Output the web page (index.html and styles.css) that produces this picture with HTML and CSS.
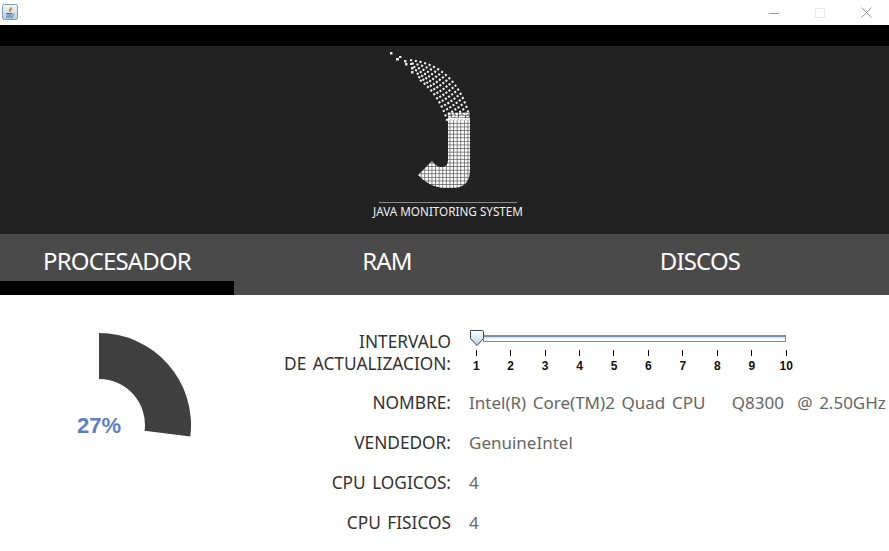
FILE: index.html
```html
<!DOCTYPE html>
<html lang="es">
<head>
<meta charset="utf-8">
<title>Java Monitoring System</title>
<link rel="stylesheet" href="styles.css">
</head>
<body>
<div class="window">
  <div class="titlebar">
    <svg class="app-icon" width="16" height="16" viewBox="0 0 16 16">
      <defs><linearGradient id="ig" x1="0" y1="0" x2="0" y2="1"><stop offset="0" stop-color="#f4f8fc"/><stop offset="1" stop-color="#b5cbe0"/></linearGradient></defs>
      <rect x=".5" y=".5" width="15" height="15" rx="2" fill="url(#ig)" stroke="#7f9ab5"/>
      <path d="M8.500 2C9.500 4 6.500 5 7 7c.2.7.8 1.200 1.200 1.500C7.800 7 10.500 6 10 3.800 9.700 4.500 9.400 3 8.500 2z" fill="#e8761e"/>
      <path d="M4 9.500h6M4.500 11h5M4 13h7" stroke="#3d6ea5" stroke-width="1" fill="none"/>
      <path d="M10.500 9.500c2 0 2 2-.5 2.200" stroke="#3d6ea5" stroke-width=".8" fill="none"/>
    </svg>
    <div class="controls">
      <div class="ctl"><svg width="10" height="10" viewBox="0 0 10 10"><path d="M0 5.500h10" stroke="#999" stroke-width="1"/></svg></div>
      <div class="ctl"><svg width="10" height="10" viewBox="0 0 10 10"><rect x=".5" y=".5" width="9" height="9" fill="none" stroke="#e6e6e6"/></svg></div>
      <div class="ctl"><svg width="11" height="11" viewBox="0 0 11 11"><path d="M.5.5l10 10M10.500.5l-10 10" stroke="#999" stroke-width="1"/></svg></div>
    </div>
  </div>
  <div class="blackbar"></div>
  <header class="banner">
    <svg class="logo" width="90" height="142" viewBox="385 48 90 142">
      <defs>
        <pattern id="grid" x="418" y="113" width="3.6" height="3.6" patternUnits="userSpaceOnUse">
          <rect width="3.6" height="3.6" fill="#666"/>
          <rect width="2.8" height="2.8" fill="#fff"/>
        </pattern>
        <pattern id="grid2" x="448" y="110" width="3.6" height="2.8" patternUnits="userSpaceOnUse">
          <rect width="2.8" height="2" fill="#fff"/>
        </pattern>
      </defs>
      <g fill="none" stroke="#f2f2f2" stroke-width="2.1" stroke-dasharray="2.1 2.700">
        <path d="M410 60Q455 65 469 115"/>
        <path d="M411.700 63.300Q452.500 70 465.500 116.300"/>
        <path d="M413.300 66.700Q450 75 462 117.700"/>
        <path d="M415 70Q447.500 80 458.500 119"/>
        <path d="M416.700 73.300Q445 85 455 120.300"/>
        <path d="M418.300 76.700Q442.500 90 451.500 121.700"/>
        <path d="M420 80Q440 95 448 123"/>
      </g>
      <g fill="#e6e6e6">
        <rect x="390" y="52" width="2.500" height="2.500"/>
        <rect x="396" y="58" width="3" height="2.500"/>
        <rect x="399" y="56" width="2.500" height="2"/>
        <rect x="404" y="60" width="2.500" height="2.500"/>
        <rect x="405" y="63" width="2.500" height="2.500"/>
        <rect x="410" y="63" width="2.500" height="2"/>
        <rect x="411" y="67" width="2.500" height="2.500"/>
        <rect x="411" y="71" width="2.500" height="2.500"/>
      </g>
      <path d="M448 118H470V170Q470 188 452 188H442Q428 186 418 175L432 161Q436 167 442 167Q448 167 448 160Z" fill="url(#grid)"/>
      <rect x="448" y="112" width="22" height="9" fill="url(#grid2)"/>
    </svg>
    <div class="brand">JAVA MONITORING SYSTEM</div>
  </header>
  <nav class="tabs">
    <div class="tab tab-active">PROCESADOR</div>
    <div class="tab">RAM</div>
    <div class="tab">DISCOS</div>
  </nav>
  <main class="content">
    <div class="gauge">
      <svg width="92" height="104" viewBox="99 333 92 104">
        <path d="M99 333A92 92 0 0 1 190.300 436.500L144.600 430.800A46 46 0 0 0 99 379Z" fill="#404040"/>
      </svg>
      <div class="gauge-value">27%</div>
    </div>
    <div class="form">
      <div class="label label-first">INTERVALO<br>DE ACTUALIZACION:</div>
      <div class="slider">
        <div class="track"></div>
        <svg class="thumb" width="16" height="17" viewBox="0 0 16 17">
          <defs><linearGradient id="tg" x1="0" y1="0" x2="0" y2="1"><stop offset="0" stop-color="#fff"/><stop offset="1" stop-color="#b8d2ea"/></linearGradient></defs>
          <path d="M1.500.5H13.500Q14.500.5 14.500 1.500V8.500L8 15.500 1.500 8.500V1.500Q1.500.5 2.500.5Z" fill="url(#tg)" stroke="#3c4650"/>
        </svg>
        <div class="scale">
          <div class="mark">1</div><div class="mark">2</div><div class="mark">3</div><div class="mark">4</div><div class="mark">5</div><div class="mark">6</div><div class="mark">7</div><div class="mark">8</div><div class="mark">9</div><div class="mark">10</div>
        </div>
      </div>
      <div class="label">NOMBRE:</div><div class="value">Intel(R) Core(TM)2 Quad CPU&nbsp;&nbsp;&nbsp;&nbsp;Q8300&nbsp;&nbsp;@ 2.50GHz</div>
      <div class="label">VENDEDOR:</div><div class="value">GenuineIntel</div>
      <div class="label">CPU LOGICOS:</div><div class="value">4</div>
      <div class="label">CPU FISICOS</div><div class="value">4</div>
    </div>
  </main>
</div>
</body>
</html>
```

FILE: styles.css
```css
html, body { margin: 0; padding: 0; }
body { background: #fff; font-family: "Noto Sans", sans-serif; }
.window { width: 889px; height: 551px; overflow: hidden; display: flex; flex-direction: column; }

.titlebar { height: 25px; display: flex; align-items: center; justify-content: space-between; background: #fff; flex: none; }
.app-icon { margin-left: 2px; margin-top: -1px; }
.controls { display: flex; }
.ctl { width: 46px; height: 25px; display: flex; align-items: center; justify-content: center; }

.blackbar { height: 21px; background: #000; flex: none; }

.banner { height: 188px; background: #222; flex: none; display: flex; flex-direction: column; align-items: center; }
.logo { margin-top: 2px; margin-right: 29px; display: block; }
.brand { margin-top: 12px; margin-left: 7px; padding-top: 1px; width: 150px; text-align: center; font-size: 11.7px; line-height: 16px; color: #f0f0f0; white-space: nowrap; position: relative; }
.brand::before { content: ""; position: absolute; left: 6px; right: 6px; top: 0; height: 1px; background: #8a8a8a; }

.tabs { height: 61px; background: #4a4a4a; flex: none; display: grid; grid-template-columns: 234px 306px 320px; }
.tab { box-sizing: border-box; height: 61px; padding-top: 10px; line-height: 34px; text-align: center; font-size: 24px; letter-spacing: -0.85px; color: #fff; }
.tab-active { border-bottom: 14px solid #000; }

.content { flex: 1; display: grid; grid-template-columns: 270px 1fr; background: #fff; min-height: 0; }
.gauge { position: relative; padding: 38px 0 0 99px; }
.gauge svg { display: block; }
.gauge-value { position: absolute; left: 77px; top: 117px; font: bold 22px/28px "Liberation Sans", sans-serif; color: #5f80c0; }

.form { padding-top: 36px; display: grid; grid-template-columns: 181px 420px; column-gap: 18px; row-gap: 16px; grid-auto-rows: 24px; grid-template-rows: 44px; }
.label { text-align: right; font-size: 17.3px; word-spacing: 2px; line-height: 22px; padding-top: 1px; color: #333; white-space: nowrap; }
.label-first { padding-top: 0; }
.value { font-size: 17px; word-spacing: 2.2px; line-height: 22px; padding-top: 1px; color: #666; white-space: nowrap; }

.slider { position: relative; padding-top: 4px; }
.track { box-sizing: border-box; margin-left: 14px; width: 303px; height: 7px; background: linear-gradient(#cfd9e6, #fff 60%); border: 1px solid #7689a2; border-top: 2px solid #7f92ab; }
.thumb { position: absolute; left: 0; top: -1px; }
.scale { display: flex; margin-left: -10px; margin-top: 8px; }
.mark { width: 34.44px; flex: none; text-align: center; font: bold 12px/14px "Liberation Sans", sans-serif; color: #111; }
.mark::before { content: ""; display: block; width: 1px; height: 6px; background: #000; margin: 0 auto 3px; }
```
